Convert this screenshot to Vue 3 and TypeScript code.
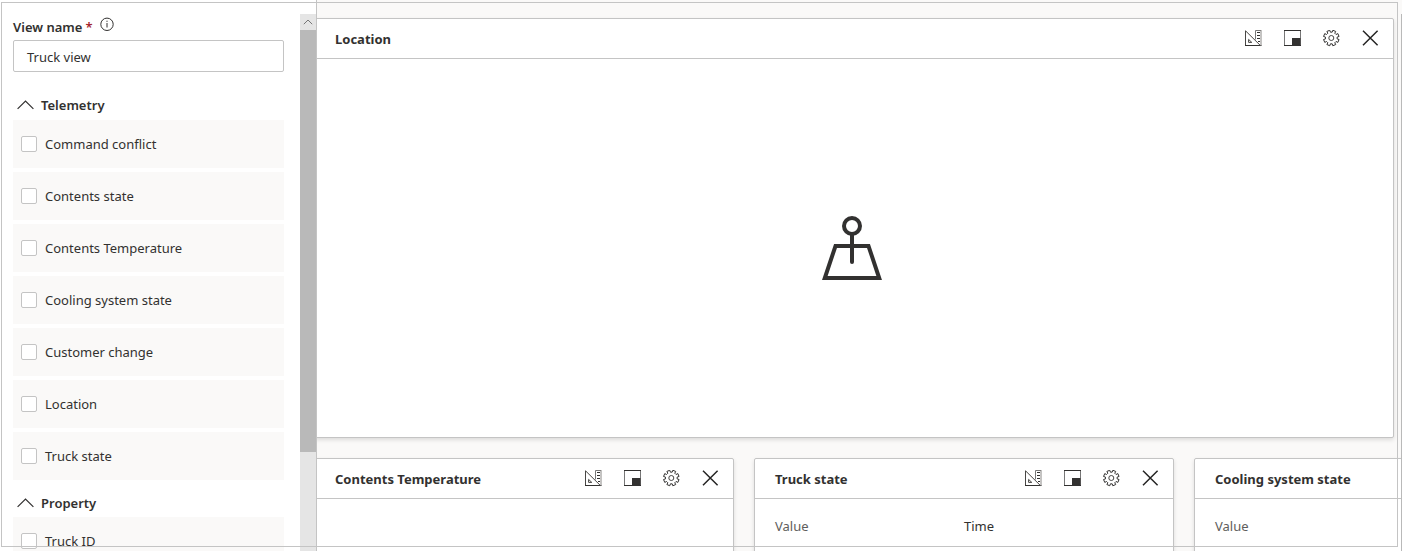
<script setup lang="ts">
interface Group { title: string; items: string[] }
interface Tile { title: string; kind: 'map' | 'chart' | 'table'; size: string; columns: string[] }

const groups: Group[] = [
  {
    title: 'Telemetry',
    items: ['Command conflict', 'Contents state', 'Contents Temperature', 'Cooling system state', 'Customer change', 'Location', 'Truck state'],
  },
  { title: 'Property', items: ['Truck ID'] },
]

const tiles: Tile[] = [
  { title: 'Location', kind: 'map', size: 'wide', columns: [] },
  { title: 'Contents Temperature', kind: 'chart', size: 'small', columns: [] },
  { title: 'Truck state', kind: 'table', size: 'small', columns: ['Value', 'Time'] },
  { title: 'Cooling system state', kind: 'table', size: 'small', columns: ['Value'] },
]

// Closed cog outline with eight teeth, centred on 8.3, 8
const cog = (() => {
  const pts: string[] = []
  for (let i = 0; i < 8; i++) {
    const a = ((i + 0.5) * Math.PI) / 4
    for (const [da, r] of [[-0.24, 5.9], [-0.2, 7.9], [0.2, 7.9], [0.24, 5.9]]) {
      pts.push(`${(8.3 + r * Math.cos(a + da)).toFixed(2)} ${(8 + r * Math.sin(a + da)).toFixed(2)}`)
    }
  }
  return `M${pts.join('L')}Z`
})()
</script>

<template>
  <div class="page">
    <aside class="sidebar">
      <div class="form">
        <div class="label">
          <span>View name</span><span class="req">*</span>
          <svg class="info" width="14" height="14" viewBox="0 0 14 14">
            <circle cx="7" cy="7.3" r="6.2" fill="none" stroke="#323130" />
            <path d="M7 6V10.5M7 3.7V4.9" stroke="#323130" />
          </svg>
        </div>
        <div class="input">Truck view</div>
        <section v-for="g in groups" :key="g.title" class="group">
          <div class="group-head">
            <svg width="17" height="10" viewBox="0 0 17 10">
              <path d="M.6 8.9L8.5 1L16.4 8.9" fill="none" stroke="#323130" stroke-width="1.2" />
            </svg>
            <span>{{ g.title }}</span>
          </div>
          <div class="rows">
            <div v-for="item in g.items" :key="item" class="row">
              <span class="check"></span>
              <span>{{ item }}</span>
            </div>
          </div>
        </section>
      </div>
      <div class="scrollbar">
        <div class="up">
          <svg width="10" height="6" viewBox="0 0 10 6">
            <path d="M.8 5.2L5 1L9.2 5.2" fill="none" stroke="#777" />
          </svg>
        </div>
        <div class="thumb"></div>
      </div>
    </aside>

    <main class="board">
      <article v-for="t in tiles" :key="t.title" class="tile" :class="[t.size, t.kind]">
        <header>
          <h2>{{ t.title }}</h2>
          <div class="tools">
            <svg width="17" height="17" viewBox="0 0 17 17" fill="none" stroke="#323130">
              <path d="M.5 15.5V.8L15.4 15.5" stroke="#484644" />
              <path d="M0 15.5H16.5" />
              <path d="M3.6 9.4V12.4H6.8Z" stroke="#484644" />
              <path d="M10.5 9.5V.5H16" stroke="#777" />
              <path d="M16 0V16" stroke="#8a8886" />
              <path d="M12 2.5H15M12 5.5H15M12 8.5H15M13 11.5H15" />
            </svg>
            <svg width="17" height="17" viewBox="0 0 17 17">
              <path d="M.5 0V16M16.5 0V16" stroke="#777" />
              <path d="M0 .5H17M0 15.5H17" stroke="#323130" />
              <rect x="8" y="8" width="8.5" height="8" fill="#323130" />
            </svg>
            <svg width="17" height="17" viewBox="0 0 17 17" fill="none" stroke="#323130">
              <path :d="cog" stroke-linejoin="round" />
              <circle cx="8.3" cy="8" r="2.5" stroke-width=".9" />
            </svg>
            <svg width="17" height="17" viewBox="0 0 17 17">
              <path d="M1 .8L15.6 15.2M15.6 .8L1 15.2" stroke="#252423" stroke-width="1.5" />
            </svg>
          </div>
        </header>
        <div v-if="t.kind === 'map'" class="map-body">
          <svg width="60" height="64" viewBox="0 0 60 64" fill="none" stroke="#323130" stroke-width="4">
            <circle cx="30" cy="10" r="8" />
            <path d="M30 18V46" stroke-linecap="round" />
            <path d="M13.5 30H46.5L57.2 62H2.8Z" />
          </svg>
        </div>
        <div v-else-if="t.kind === 'table'" class="columns">
          <span v-for="c in t.columns" :key="c">{{ c }}</span>
        </div>
      </article>
    </main>

    <div class="frame"></div>
    <div class="edge"></div>
  </div>
</template>

<style>
html, body { margin: 0; overflow: hidden; }
</style>

<style scoped>
.page {
  position: relative;
  display: flex;
  width: 1402px;
  height: 551px;
  overflow: hidden;
  background: #faf9f8;
  color: #323130;
  font: 13px/20px "Noto Sans", "Open Sans", sans-serif;
}
.sidebar {
  display: flex;
  justify-content: space-between;
  flex: none;
  box-sizing: border-box;
  width: 317px;
  height: 551px;
  border-right: 1px solid #c4c4c4;
  background: #fff;
  overflow: hidden;
}
.form { width: 271px; padding: 17px 0 0 13px; }
.label { display: flex; height: 23px; font-weight: 600; }
.req { margin-left: 3px; color: #a4262c; }
.info { margin: 0 0 0 7px; }
.input {
  box-sizing: border-box;
  height: 32px;
  padding: 6px 13px;
  border: 1px solid #c4c4c4;
  border-radius: 2px;
}
.group-head {
  display: flex;
  align-items: center;
  gap: 7px;
  height: 30px;
  padding: 0 0 0 4px;
  font-weight: 600;
}
.group { padding-top: 18px; }
.group + .group { padding-top: 8px; }
.group + .group .group-head { height: 29px; }
.rows { display: flex; flex-direction: column; gap: 4px; }
.row {
  display: flex;
  align-items: center;
  gap: 8px;
  height: 48px;
  padding-left: 8px;
  background: #faf9f8;
}
.check {
  box-sizing: border-box;
  width: 16px;
  height: 16px;
  border: 1px solid #c4c4c4;
  border-radius: 2px;
  background: #fff;
}
.scrollbar { width: 16px; height: 537px; margin-top: 14px; background: #e5e5e5; }
.up { display: flex; align-items: center; justify-content: center; height: 16px; }
.thumb { height: 422px; background: #b9b9b9; }

.board {
  display: grid;
  flex: none;
  grid-template-columns: 420px 420px 420px;
  grid-template-rows: 420px 420px;
  gap: 20px;
  box-sizing: border-box;
  width: 1085px;
  height: 551px;
  padding-top: 18px;
  overflow: hidden;
}
.tile {
  box-sizing: border-box;
  width: 420px;
  margin-left: -3px;
  border: 1px solid #c4c4c4;
  border-radius: 2px;
  background: #fff;
  box-shadow: 0 2px 4px rgba(0, 0, 0, .12);
}
.tile.wide { grid-column: 1 / 4; width: 1080px; }
.tile header {
  display: flex;
  align-items: center;
  justify-content: space-between;
  box-sizing: border-box;
  height: 40px;
  padding: 0 14px 0 20px;
  border-bottom: 1px solid #c4c4c4;
}
h2 { margin: 0; font-size: 13px; line-height: 20px; font-weight: 700; }
.tools { display: flex; gap: 22px; }
.map-body { display: flex; justify-content: center; padding: 157px 4px 0 0; }
.columns { display: grid; grid-template-columns: 189px 1fr; padding: 17px 20px; }
.columns span:first-child { color: #605e5c; }
.frame {
  position: absolute;
  top: 2px;
  left: 1px;
  box-sizing: border-box;
  width: 1397px;
  height: 545px;
  border: 1px solid #c4c4c4;
}
.edge { position: absolute; top: 14px; right: 0; width: 1px; height: 537px; background: #b9b9b9; }
</style>
